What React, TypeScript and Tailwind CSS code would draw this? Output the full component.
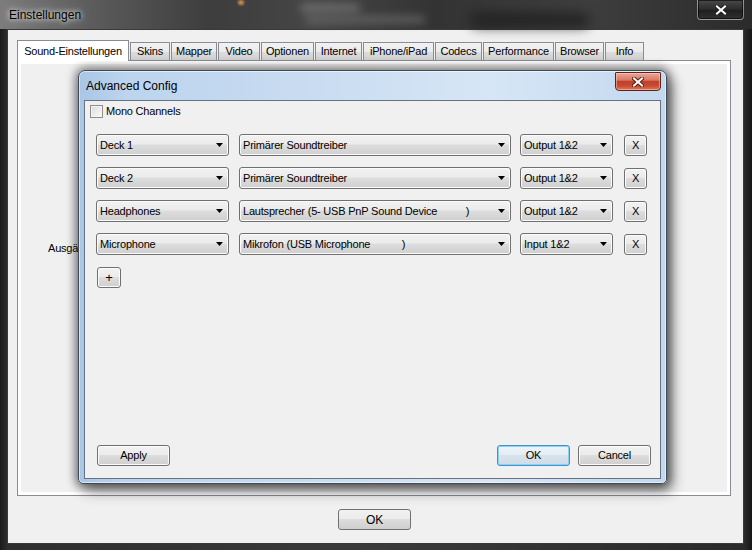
import React from 'react';

const tabs: { label: string; width: string }[] = [
  { label: 'Sound-Einstellungen', width: 'w-[112px]' },
  { label: 'Skins', width: 'w-[40px]' },
  { label: 'Mapper', width: 'w-[46px]' },
  { label: 'Video', width: 'w-[42px]' },
  { label: 'Optionen', width: 'w-[53px]' },
  { label: 'Internet', width: 'w-[47px]' },
  { label: 'iPhone/iPad', width: 'w-[71px]' },
  { label: 'Codecs', width: 'w-[47px]' },
  { label: 'Performance', width: 'w-[71px]' },
  { label: 'Browser', width: 'w-[49px]' },
  { label: 'Info', width: 'w-[39px]' },
];

const rows = [
  { role: 'Deck 1', device: 'Primärer Soundtreiber', channels: 'Output 1&2' },
  { role: 'Deck 2', device: 'Primärer Soundtreiber', channels: 'Output 1&2' },
  { role: 'Headphones', device: 'Lautsprecher (5- USB PnP Sound Device          )', channels: 'Output 1&2' },
  { role: 'Microphone', device: 'Mikrofon (USB Microphone           )', channels: 'Input 1&2' },
];

const buttonFace =
  'border border-[#707070] rounded-[3px] bg-[linear-gradient(#f2f2f2_0%,#ebebeb_45%,#dddddd_50%,#cfcfcf_100%)] shadow-[inset_0_0_0_1px_#fbfbfb]';

function DropArrow() {
  return (
    <svg width="7" height="4" viewBox="0 0 7 4" className="shrink-0">
      <path d="M0 0H7L3.5 4Z" fill="#000" />
    </svg>
  );
}

function Combo({ value, width }: { value: string; width: string }) {
  return (
    <div className={`${width} h-[22px] flex items-center justify-between pl-[3px] pr-[5px] ${buttonFace}`}>
      <span className="whitespace-pre">{value}</span>
      <DropArrow />
    </div>
  );
}

function WinButton({ label, isDefault = false }: { label: string; isDefault?: boolean }) {
  const face = isDefault
    ? 'border border-[#3d95cf] rounded-[3px] bg-[linear-gradient(#eef5fa_0%,#e4edf3_45%,#d7e3ec_50%,#cfdce6_100%)] shadow-[inset_0_0_0_1px_#8fd0f2]'
    : buttonFace;
  return <div className={`w-[73px] h-[21px] flex items-center justify-center ${face}`}>{label}</div>;
}

function CloseGlyph({ color, stroke }: { color: string; stroke: string }) {
  return (
    <svg width="12" height="10" viewBox="0 0 12 10">
      <path d="M2 1.5L10 8.5M10 1.5L2 8.5" stroke={stroke} strokeWidth="4" strokeLinecap="square" />
      <path d="M2 1.5L10 8.5M10 1.5L2 8.5" stroke={color} strokeWidth="2" strokeLinecap="square" />
    </svg>
  );
}

function AdvancedConfig() {
  return (
    <div className="absolute left-[78px] top-[70px] w-[589px] h-[414px] flex flex-col rounded-t-[7px] rounded-b-[5px] border border-[#3f4a56] bg-[linear-gradient(90deg,#a9c6e6_0%,#bcd4ee_8%,#c9dcf1_40%,#d6e6f6_70%,#c3d8ef_100%)] shadow-[inset_0_0_0_1px_rgba(255,255,255,0.55),0_0_10px_3px_rgba(0,0,0,0.45),5px_7px_14px_rgba(0,0,0,0.45)]">
      {/* title bar */}
      <div className="h-[29px] flex justify-between items-start pl-[7px] pr-[5px]">
        <span className="h-[29px] flex items-center text-[12px] text-black">Advanced Config</span>
        <div className="mt-[1px] w-[46px] h-[19px] flex items-center justify-center rounded-b-[4px] rounded-t-[1px] border border-[#5f2218] bg-[linear-gradient(#eaa89b_0%,#d97863_42%,#c1412a_50%,#c84a31_75%,#dd7a5a_100%)] shadow-[inset_0_0_0_1px_rgba(255,210,200,0.5)]">
          <CloseGlyph color="#ffffff" stroke="#5a1e14" />
        </div>
      </div>

      {/* client area */}
      <div className="mx-[5px] mb-[4px] flex-1 flex flex-col border border-[#66727f] bg-[#f0f0f0] text-[11px] tracking-[-0.2px] text-black">
        <div className="flex items-center pl-[5px] pt-[4px] leading-[13px]">
          <div className="w-[13px] h-[13px] border border-[#8e8f8f] bg-[linear-gradient(135deg,#dcdcdc,#fbfbfb)] shadow-[inset_0_0_0_1px_#f4f4f4]" />
          <span className="ml-[3px]">Mono Channels</span>
        </div>

        <div className="mt-[16px] pl-[11px] flex flex-col gap-[11px]">
          {rows.map((r) => (
            <div key={r.role} className="flex items-start h-[22px]">
              <Combo value={r.role} width="w-[133px]" />
              <div className="ml-[10px]">
                <Combo value={r.device} width="w-[272px]" />
              </div>
              <div className="ml-[9px]">
                <Combo value={r.channels} width="w-[93px]" />
              </div>
              <div className={`ml-[11px] mt-[1px] w-[23px] h-[21px] flex items-center justify-center ${buttonFace}`}>X</div>
            </div>
          ))}
        </div>

        <div className={`mt-[12px] ml-[12px] w-[24px] h-[21px] flex items-center justify-center text-[13px] ${buttonFace}`}>+</div>

        <div className="mt-auto pb-[12px] pl-[12px] pr-[9px] flex items-center">
          <WinButton label="Apply" />
          <div className="ml-auto flex gap-[8px]">
            <WinButton label="OK" isDefault />
            <WinButton label="Cancel" />
          </div>
        </div>
      </div>
    </div>
  );
}

export default function App() {
  return (
    <div className="relative w-[752px] h-[550px] overflow-hidden font-['Liberation_Sans',Arial,sans-serif] bg-[linear-gradient(90deg,#1b1b1b_0%,#2e2e2e_1%,#3b3b3b_50%,#2a2a2a_99%,#161616_100%)]">
      {/* title bar */}
      <div className="relative h-[29px] flex justify-between items-start bg-[linear-gradient(90deg,#7c7c7c_0%,#5c5c5c_12%,#3d3d3d_28%,#464646_42%,#333333_58%,#3e3e3e_78%,#2b2b2b_100%)]">
        <div className="absolute left-[300px] top-[4px] w-[60px] h-[8px] rounded bg-[#8a8a8a] blur-[4px] opacity-60" />
        <div className="absolute left-[305px] top-[16px] w-[120px] h-[7px] rounded bg-[#7a7a7a] blur-[4px] opacity-60" />
        <div className="absolute left-[470px] top-[12px] w-[120px] h-[16px] rounded-full bg-[#1c1c1c] blur-[6px] opacity-70" />
        <div className="absolute left-[238px] top-[0px] w-[6px] h-[5px] rounded-full bg-[#c98a4a] blur-[1px]" />
        <span className="relative h-[29px] pl-[9px] flex items-center text-[12px] text-black [text-shadow:0_0_5px_rgba(255,255,255,0.95),0_0_10px_rgba(255,255,255,0.7)]">
          Einstellungen
        </span>
        <div className="relative mr-[8px] w-[47px] h-[20px] flex items-center justify-center rounded-b-[4px] border border-t-0 border-[rgba(255,255,255,0.45)] bg-[linear-gradient(#4a4a4a,#2a2a2a_50%,#1e1e1e_51%,#303030)] shadow-[inset_0_0_0_1px_rgba(0,0,0,0.6)]">
          <CloseGlyph color="#ffffff" stroke="#222222" />
        </div>
      </div>

      {/* client area */}
      <div className="ml-[7px] w-[737px] h-[515px] border border-[#3a3a3a] bg-[#f0f0f0] flex flex-col text-[11px] tracking-[-0.2px] text-black">
        <div className="pt-[10px] pl-[9px]">
          <div className="flex items-end gap-[1px] h-[20px]">
            {tabs.map((t, i) =>
              i === 0 ? (
                <div key={t.label} className={`${t.width} relative z-10 -mb-px h-[21px] flex items-center justify-center border border-b-0 border-[#898c95] bg-white`}>
                  {t.label}
                </div>
              ) : (
                <div key={t.label} className={`${t.width} h-[18px] flex items-center justify-center border border-b-0 border-[#898c95] bg-[linear-gradient(#f2f2f2_0%,#ebebeb_50%,#dddddd_51%,#cfcfcf_100%)]`}>
                  {t.label}
                </div>
              )
            )}
          </div>
          <div className="w-[714px] h-[436px] border border-[#898c95] bg-white p-[3px]">
            <div className="h-full bg-[#f0f0f0] pt-[176px] pl-[27px]">Ausgä</div>
          </div>
        </div>
        <div className="mt-[13px] ml-[330px] w-[73px] h-[21px] flex items-center justify-center border border-[#707070] rounded-[3px] bg-[linear-gradient(#f2f2f2_0%,#ebebeb_45%,#dddddd_50%,#cfcfcf_100%)] text-[12px]">
          OK
        </div>
      </div>

      <AdvancedConfig />
    </div>
  );
}
